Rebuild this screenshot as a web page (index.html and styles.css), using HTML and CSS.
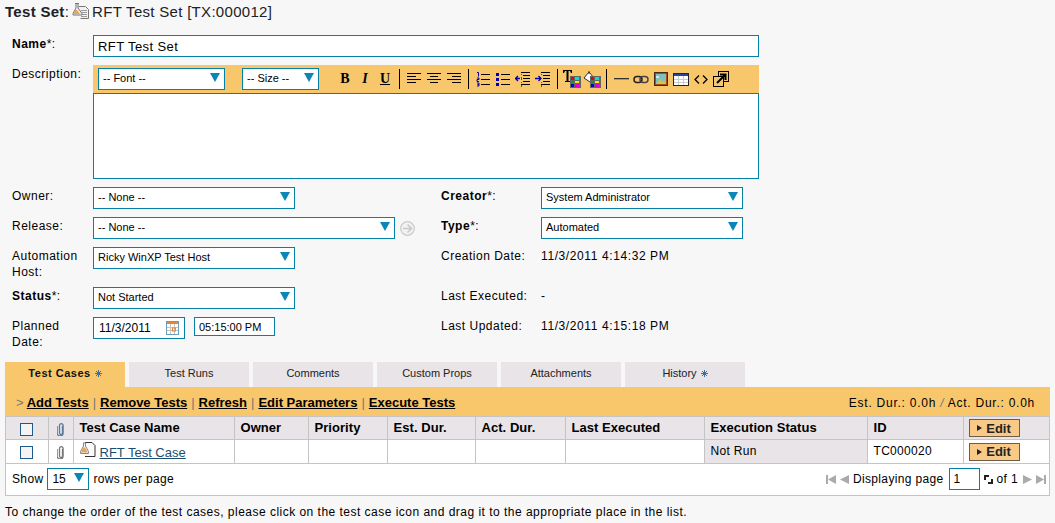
FILE: index.html
```html
<!DOCTYPE html>
<html>
  <head>
    <meta charset="utf-8">
    <title>Test Set</title>
    <link rel="stylesheet" href="styles.css">
  </head>
  <body>
    <h1 class="page-title">
      <span><b>Test Set</b>:</span>
      <svg class="title-icon" width="17" height="17" viewBox="0 0 17 17"><path d="M6.5 3.5h7l3 3v9h-8" fill="#f2f2f2" stroke="#777"/><path d="M9 7.500h6M9 9.500h6M9 11.500h6M9 13.500h6" stroke="#999"/><path d="M3 .5h4M4 1v4L1 10.500v1.500h9v-1.500L6 5V1" fill="#eee" stroke="#777"/><path d="M3 7h2l3 4H1.500z" fill="#e9a55c"/></svg>
      <span>RFT Test Set [TX:000012]</span>
    </h1>

    <form class="details">
      <label class="req">Name<span>*:</span></label>
      <input class="text wide" type="text" value="RFT Test Set">

      <label>Description:</label>
      <div class="editor wide">
        <div class="editor-bar">
          <div class="pick pick-font"><select><option>-- Font --</option></select></div>
          <div class="pick pick-size"><select><option>-- Size --</option></select></div>
          <div class="tools">
            <span class="tool tool-b">B</span>
            <span class="tool tool-i">I</span>
            <span class="tool tool-u">U</span>
            <i class="sep"></i>
            <span class="tool"><svg width="15" height="14" viewBox="0 0 15 14"><path d="M0 1.500h14M0 4.500h9M0 7.500h14M0 10.500h9" stroke="#000"/></svg></span>
            <span class="tool"><svg width="15" height="14" viewBox="0 0 15 14"><path d="M0 1.500h14M3 4.500h8M0 7.500h14M3 10.500h8" stroke="#000"/></svg></span>
            <span class="tool"><svg width="15" height="14" viewBox="0 0 15 14"><path d="M0 1.500h14M5 4.500h9M0 7.500h14M5 10.500h9" stroke="#000"/></svg></span>
            <i class="sep"></i>
            <span class="tool"><svg width="15" height="15" viewBox="0 0 15 15"><path d="M1 .5h1.500v4M1 6h2v1.500H1v2h2M1 11h2v1.500H1.500M3 12.500v1.500H1" fill="none" stroke="#00a"/><path d="M5 2.500h9M5 7.500h9M5 12.500h9" stroke="#000"/></svg></span>
            <span class="tool"><svg width="15" height="15" viewBox="0 0 15 15"><path d="M0 1h3v3H0zM0 6h3v3H0zM0 11h3v3H0z" fill="#00a"/><path d="M5 2.500h9M5 7.500h9M5 12.500h9" stroke="#000"/></svg></span>
            <span class="tool"><svg width="16" height="15" viewBox="0 0 16 15"><path d="M6 .5h9M8 3.500h7M8 6.500h7M8 9.500h7M6 12.500h9" stroke="#000"/><path d="M6.500 2v1M6.500 5v3M6.500 10v1M6.500 13v2" stroke="#555"/><path d="M0 6.500h5M3 4L.5 6.500 3 9" fill="none" stroke="#00a" stroke-width="1.300"/></svg></span>
            <span class="tool"><svg width="16" height="15" viewBox="0 0 16 15"><path d="M6 .5h9M8 3.500h7M8 6.500h7M8 9.500h7M6 12.500h9" stroke="#000"/><path d="M6.500 2v1M6.500 10v1M6.500 13v2" stroke="#555"/><path d="M0 6.500h6M3.500 4L6 6.500 3.500 9" fill="none" stroke="#00a" stroke-width="1.300"/></svg></span>
            <i class="sep"></i>
            <span class="tool tool-color">
              <svg width="18" height="18" viewBox="0 0 18 18"><rect x="7" y="6" width="11" height="12" fill="#666"/><path d="M8 7h3v3H8z" fill="#e00"/><path d="M12 7h4v3h-4z" fill="#0dd"/><path d="M8 11h3v2H8z" fill="#0a0"/><path d="M12 11h4v2h-4z" fill="#ee0"/><path d="M8 14h3v3H8z" fill="#00d"/><path d="M12 14h4v3h-4z" fill="#d0d"/><path d="M0 0h9v3H8L7 1H5.500v10H7v1H2v-1h1.500V1H2L1 3H0z" fill="#000"/></svg>
            </span>
            <span class="tool">
              <svg width="18" height="18" viewBox="0 0 18 18"><path d="M1 8l5-6 5 6-4 4z" fill="#fff" stroke="#333"/><path d="M6 1v3" stroke="#333"/><rect x="7" y="6" width="11" height="12" fill="#666"/><path d="M8 7h3v3H8z" fill="#e00"/><path d="M12 7h4v3h-4z" fill="#0dd"/><path d="M8 11h3v2H8z" fill="#0a0"/><path d="M12 11h4v2h-4z" fill="#ee0"/><path d="M8 14h3v3H8z" fill="#00d"/><path d="M12 14h4v3h-4z" fill="#d0d"/></svg>
            </span>
            <i class="sep"></i>
            <span class="tool"><svg width="15" height="4" viewBox="0 0 15 4"><path d="M0 1.500h15" stroke="#333"/><path d="M0 2.500h15" stroke="#999"/></svg></span>
            <span class="tool"><svg width="16" height="9" viewBox="0 0 16 9"><rect x="1" y="1.500" width="8" height="6" rx="3" fill="none" stroke="#222" stroke-width="1.500"/><rect x="7" y="1.500" width="8" height="6" rx="3" fill="none" stroke="#444" stroke-width="1.500"/></svg></span>
            <span class="tool"><svg width="14" height="14" viewBox="0 0 14 14"><rect x=".5" y=".5" width="13" height="13" fill="#a5501c" stroke="#4a2a10"/><rect x="2" y="2" width="10" height="10" fill="#7fc0c0"/><path d="M2 12l4-5 2 3 2-2 2 4z" fill="#d8c24a"/><path d="M2 4h3v2H2z" fill="#cfe8e8"/></svg></span>
            <span class="tool"><svg width="16" height="13" viewBox="0 0 16 13"><rect x=".5" y=".5" width="15" height="12" fill="#fff" stroke="#223"/><rect x="1" y="1" width="14" height="2" fill="#2244aa"/><path d="M1 6.500h14M1 9.500h14M5.500 3v9M10.500 3v9" stroke="#ccc"/></svg></span>
            <span class="tool"><svg width="14" height="9" viewBox="0 0 14 9"><path d="M5 .5L1 4.500l4 4M9 .5l4 4-4 4" fill="none" stroke="#000" stroke-width="1.300"/></svg></span>
            <span class="tool"><svg width="16" height="16" viewBox="0 0 16 16"><rect x="5.500" y=".5" width="10" height="10" fill="none" stroke="#000"/><rect x=".5" y="5.500" width="10" height="10" fill="#f8c76c" stroke="#000"/><path d="M4 12l8-8M7 3.500h5.500V9" fill="none" stroke="#000" stroke-width="2"/></svg></span>
          </div>
        </div>
        <div class="editor-body"></div>
      </div>

      <label>Owner:</label>
      <div class="field-left"><div class="pick pick-std"><select><option>-- None --</option></select></div></div>
      <label class="req">Creator<span>*:</span></label>
      <div class="pick pick-std"><select><option>System Administrator</option></select></div>

      <label>Release:</label>
      <div class="field-left">
        <div class="pick pick-long"><select><option>-- None --</option></select></div>
        <svg class="go-icon" width="15" height="15" viewBox="0 0 15 15"><circle cx="7.500" cy="7.500" r="6.800" fill="#f2f2f2" stroke="#ccc" stroke-width="1.300"/><path d="M3 7.500h8M7.500 3.500l4 4-4 4" fill="none" stroke="#c8c8c8" stroke-width="1.500"/></svg>
      </div>
      <label class="req">Type<span>*:</span></label>
      <div class="pick pick-std"><select><option>Automated</option></select></div>

      <label>Automation Host:</label>
      <div class="field-left"><div class="pick pick-std"><select><option>Ricky WinXP Test Host</option></select></div></div>
      <label>Creation Date:</label>
      <div class="value">11/3/2011 4:14:32 PM</div>

      <label class="req">Status<span>*:</span></label>
      <div class="field-left"><div class="pick pick-std"><select><option>Not Started</option></select></div></div>
      <label>Last Executed:</label>
      <div class="value">-</div>

      <label>Planned Date:</label>
      <div class="field-left date-fields">
        <div class="date-box">
          <span>11/3/2011</span>
          <svg width="13" height="14" viewBox="0 0 13 14"><rect x=".5" y=".5" width="12" height="13" fill="#fff" stroke="#6d9ebb"/><rect x="1" y="1" width="11" height="2" fill="#e8862e"/><path d="M1 6.500h11M1 9.500h11M4.500 3v10M8.500 3v10" stroke="#c4c4c4"/><rect x="6.500" y="7" width="3" height="3" fill="none" stroke="#e8862e"/></svg>
        </div>
        <input class="text time" type="text" value="05:15:00 PM">
      </div>
      <label>Last Updated:</label>
      <div class="value">11/3/2011 4:15:18 PM</div>
    </form>

    <div class="tabs">
      <a class="tab active">Test Cases <svg width="7" height="7" viewBox="0 0 7 7"><path d="M3.500 0v7M0 3.500h7M1 1l5 5M6 1L1 6" stroke="#3a6ea5"/></svg></a>
      <a class="tab">Test Runs</a>
      <a class="tab">Comments</a>
      <a class="tab">Custom Props</a>
      <a class="tab">Attachments</a>
      <a class="tab">History <svg width="7" height="7" viewBox="0 0 7 7"><path d="M3.500 0v7M0 3.500h7M1 1l5 5M6 1L1 6" stroke="#3a6ea5"/></svg></a>
    </div>

    <div class="actions">
      <div class="action-links">
        <span class="chevron">&gt;</span>
        <a>Add Tests</a><i>|</i><a>Remove Tests</a><i>|</i><a>Refresh</a><i>|</i><a>Edit Parameters</a><i>|</i><a>Execute Tests</a>
      </div>
      <div class="durations">Est. Dur.: 0.0h <i>/</i> Act. Dur.: 0.0h</div>
    </div>

    <div class="grid-wrap">
      <table class="grid">
        <colgroup>
          <col class="c1"><col class="c2"><col class="c3"><col class="c4"><col class="c5"><col class="c6">
          <col class="c7"><col class="c8"><col class="c9"><col class="c10"><col class="c11">
        </colgroup>
        <tr class="head">
          <th class="center"><span class="check"></span></th>
          <th class="center"><svg class="clip" width="8" height="13" viewBox="0 0 8 13"><path d="M5.500 3v7a1.500 1.500 0 0 1-3 0V2.500a1.800 1.800 0 0 1 3.600 0V10a3 3 0 0 1-6 0V3" fill="none" stroke="#5a7a9a" stroke-width="1.300"/></svg></th>
          <th>Test Case Name</th>
          <th>Owner</th>
          <th>Priority</th>
          <th>Est. Dur.</th>
          <th>Act. Dur.</th>
          <th>Last Executed</th>
          <th>Execution Status</th>
          <th>ID</th>
          <th class="edit-cell"><button type="button" class="edit"><em></em>Edit</button></th>
        </tr>
        <tr>
          <td class="center"><span class="check"></span></td>
          <td class="center"><svg class="clip" width="8" height="13" viewBox="0 0 8 13"><path d="M5.500 3v7a1.500 1.500 0 0 1-3 0V2.500a1.800 1.800 0 0 1 3.600 0V10a3 3 0 0 1-6 0V3" fill="none" stroke="#777" stroke-width="1.300"/></svg></td>
          <td>
            <div class="name-line">
              <svg width="16" height="16" viewBox="0 0 16 16"><path d="M5 .5h7l3 3v11H5" fill="#fafafa" stroke="#333"/><path d="M3 1h3M3.500 1v3L.5 9.500v2h8v-2L5.500 4V1" fill="#f4f4f4" stroke="#888"/><path d="M3 5.500h2l3 5H1z" fill="#e9a55c"/></svg>
              <a>RFT Test Case</a>
            </div>
          </td>
          <td></td><td></td><td></td><td></td><td></td>
          <td class="shade">Not Run</td>
          <td>TC000020</td>
          <td class="edit-cell"><button type="button" class="edit"><em></em>Edit</button></td>
        </tr>
      </table>
      <div class="pager">
        <div class="pager-size">
          Show
          <div class="pick pick-rows"><select><option>15</option></select></div>
          rows per page
        </div>
        <div class="pager-nav">
          <svg width="10" height="9" viewBox="0 0 10 9"><path d="M0 0h2v9H0zM10 0v9L2 4.500z" fill="#aaa"/></svg>
          <svg width="9" height="9" viewBox="0 0 9 9"><path d="M9 0v9L0 4.500z" fill="#aaa"/></svg>
          <span>Displaying page</span>
          <input class="text page-no" type="text" value="1">
          <svg width="9" height="9" viewBox="0 0 9 9"><path d="M0 0h5v2H2v3H0zM9 9H4V7h3V4h2z" fill="#222"/></svg>
          <span>of 1</span>
          <svg class="nav-gap" width="9" height="9" viewBox="0 0 9 9"><path d="M0 0v9l9-4.500z" fill="#aaa"/></svg>
          <svg width="10" height="9" viewBox="0 0 10 9"><path d="M0 0v9l8-4.500zM8 0h2v9H8z" fill="#aaa"/></svg>
        </div>
      </div>
    </div>

    <p class="hint">To change the order of the test cases, please click on the test case icon and drag it to the appropriate place in the list.</p>
  </body>
</html>
```

FILE: styles.css
```css
body {
  margin: 0;
  padding: 0 5px;
  background-color: #f7f7f7;
  font-family: "Liberation Sans", Arial, sans-serif;
  font-size: 12px;
  color: #000;
  overflow: hidden;
}

.page-title {
  display: flex;
  align-items: center;
  gap: 3px;
  height: 22px;
  margin: 0;
  font-size: 15px;
  font-weight: normal;
  letter-spacing: 0.3px;
  color: #222;
}

.details {
  display: grid;
  grid-template-columns: 81px 348px 100px 220px;
  row-gap: 8px;
  padding: 13px 0 0 7px;
}

.details label {
  line-height: 16px;
  padding: 1px 8px 0 0;
  margin-bottom: -1px;
  letter-spacing: 0.5px;
}

.req {
  font-weight: bold;
}

.req span {
  font-weight: normal;
}

.wide {
  grid-column: 2 / 5;
}

.text {
  box-sizing: border-box;
  height: 22px;
  padding: 0 4px;
  border: 1px solid #0580a8;
  border-radius: 0;
  background-color: #fff;
  font-family: inherit;
  font-size: 12px;
  outline: none;
}

input.wide {
  width: 666px;
  font-size: 13px;
  letter-spacing: 0.4px;
}

.editor {
  width: 666px;
}

.editor-bar {
  display: flex;
  align-items: center;
  box-sizing: border-box;
  height: 28px;
  padding-left: 5px;
  background-color: #f8c76c;
}

.editor-body {
  box-sizing: border-box;
  height: 86px;
  border: 1px solid #0580a8;
  background-color: #fff;
}

.tools {
  display: flex;
  align-items: center;
  margin-left: 16px;
}

.tool {
  display: flex;
  justify-content: center;
  align-items: center;
  width: 20px;
  height: 20px;
  font-family: "Liberation Serif", serif;
  font-size: 14px;
  font-weight: bold;
}

.tool-i {
  font-style: italic;
}

.tool-u {
  text-decoration: underline;
}

.sep {
  width: 1px;
  height: 20px;
  margin: 0 4px;
  background-color: #000;
}

.pick {
  position: relative;
  box-sizing: border-box;
  height: 22px;
  border: 1px solid #0580a8;
  background-color: #fff;
}

.pick::after {
  content: "";
  position: absolute;
  top: 4px;
  right: 4px;
  border-style: solid;
  border-width: 9px 5px 0;
  border-color: #0a86b8 transparent transparent;
}

.pick select {
  display: block;
  width: 100%;
  height: 18px;
  padding: 0 0 0 4px;
  border: 0;
  background: transparent;
  font-family: inherit;
  font-size: 11px;
  appearance: none;
  outline: none;
}

.pick-font {
  width: 127px;
}

.pick-size {
  width: 77px;
  margin-left: 17px;
}

.pick-std {
  width: 202px;
}

.pick-long {
  width: 302px;
}

.pick-rows {
  width: 42px;
}

.pick-rows select {
  height: 20px;
  font-size: 12px;
}

.field-left {
  display: flex;
  align-items: flex-start;
}

.go-icon {
  margin: 4px 0 0 5px;
}

.value {
  line-height: 16px;
  padding-top: 1px;
  margin-bottom: -1px;
  letter-spacing: 0.6px;
}

.date-fields {
  gap: 9px;
}

.date-box {
  display: flex;
  justify-content: space-between;
  align-items: center;
  box-sizing: border-box;
  width: 92px;
  height: 22px;
  padding: 0 5px;
  border: 1px solid #0580a8;
  background-color: #fff;
}

.time {
  width: 81px;
  height: 19px;
  padding: 0 4px;
  font-size: 11px;
}

.tabs {
  display: flex;
  gap: 4px;
  margin-top: 13px;
}

.tab {
  display: flex;
  justify-content: center;
  align-items: center;
  gap: 4px;
  box-sizing: border-box;
  width: 120px;
  height: 25px;
  padding-bottom: 3px;
  background-color: #e8e4e8;
  font-size: 11px;
  color: #222;
}

.tab.active {
  background-color: #f8c76c;
  font-weight: bold;
  letter-spacing: 0.5px;
  color: #111;
}

.actions {
  display: flex;
  justify-content: space-between;
  align-items: center;
  box-sizing: border-box;
  height: 29px;
  padding: 2px 15px 0 11px;
  background-color: #f8c76c;
}

.action-links {
  font-size: 13px;
  font-weight: bold;
}

.action-links a {
  text-decoration: underline;
}

.action-links i {
  margin: 0 4px;
  font-style: normal;
  font-weight: normal;
  color: #777;
}

.chevron {
  font-weight: normal;
  color: #777;
}

.durations {
  letter-spacing: 0.75px;
}

.durations i {
  color: #777;
}

.grid-wrap {
  border: 1px solid #c4c4c4;
  border-top: 0;
  background-color: #fff;
  width: 1043px;
}

.grid {
  table-layout: fixed;
  width: 1043px;
  border-collapse: collapse;
}

.c1 { width: 42px; }
.c2 { width: 25px; }
.c3 { width: 161px; }
.c4 { width: 74px; }
.c5 { width: 79px; }
.c6 { width: 88px; }
.c7 { width: 90px; }
.c8 { width: 139px; }
.c9 { width: 163px; }
.c10 { width: 96px; }
.c11 { width: 86px; }

.grid th,
.grid td {
  box-sizing: border-box;
  padding: 0 5px 2px 6px;
  border: 1px solid #c4c4c4;
  text-align: left;
  letter-spacing: 0.3px;
}

.grid th {
  height: 23px;
  background-color: #e8e4e8;
  font-size: 13px;
  letter-spacing: 0.05px;
}

.grid td {
  height: 24px;
}

.grid tr > :first-child {
  border-left: 0;
}

.grid tr > :last-child {
  border-right: 0;
}

.grid .center {
  padding: 0;
  text-align: center;
  vertical-align: middle;
}

.grid .shade {
  background-color: #e8e4e8;
}

.check {
  display: inline-block;
  width: 11px;
  height: 11px;
  border: 1px solid #1f5a8a;
  background-color: #f4f4f4;
  vertical-align: middle;
}

.clip {
  display: inline-block;
  vertical-align: middle;
}

.name-line {
  display: flex;
  align-items: center;
  gap: 4px;
}

.name-line svg {
  margin-top: -2px;
}

.name-line a {
  margin-top: 3px;
  color: #1b4f72;
  text-decoration: underline;
  font-size: 13px;
  letter-spacing: 0;
}

.grid .edit-cell {
  padding: 0 0 0 5px;
}

.edit {
  display: flex;
  align-items: center;
  justify-content: center;
  box-sizing: border-box;
  width: 51px;
  height: 18px;
  padding: 0;
  border: 1px solid #6e5c44;
  background-color: #f9c988;
  font-family: inherit;
  font-size: 13px;
  font-weight: bold;
  color: #222;
}

.edit em {
  width: 0;
  height: 0;
  margin-right: 4px;
  border-style: solid;
  border-width: 3px 0 3px 5px;
  border-color: transparent transparent transparent #222;
}

.pager {
  display: flex;
  justify-content: space-between;
  align-items: flex-start;
  box-sizing: border-box;
  height: 31px;
  padding: 4px 3px 0 6px;
}

.pager-size,
.pager-nav {
  display: flex;
  align-items: center;
  gap: 4px;
  height: 22px;
  letter-spacing: 0.35px;
}

.nav-gap {
  margin-left: 1px;
}

.page-no {
  width: 31px;
  margin-left: 1px;
}

.hint {
  margin: 8px 0 0;
  line-height: 16px;
  letter-spacing: 0.48px;
}
```
